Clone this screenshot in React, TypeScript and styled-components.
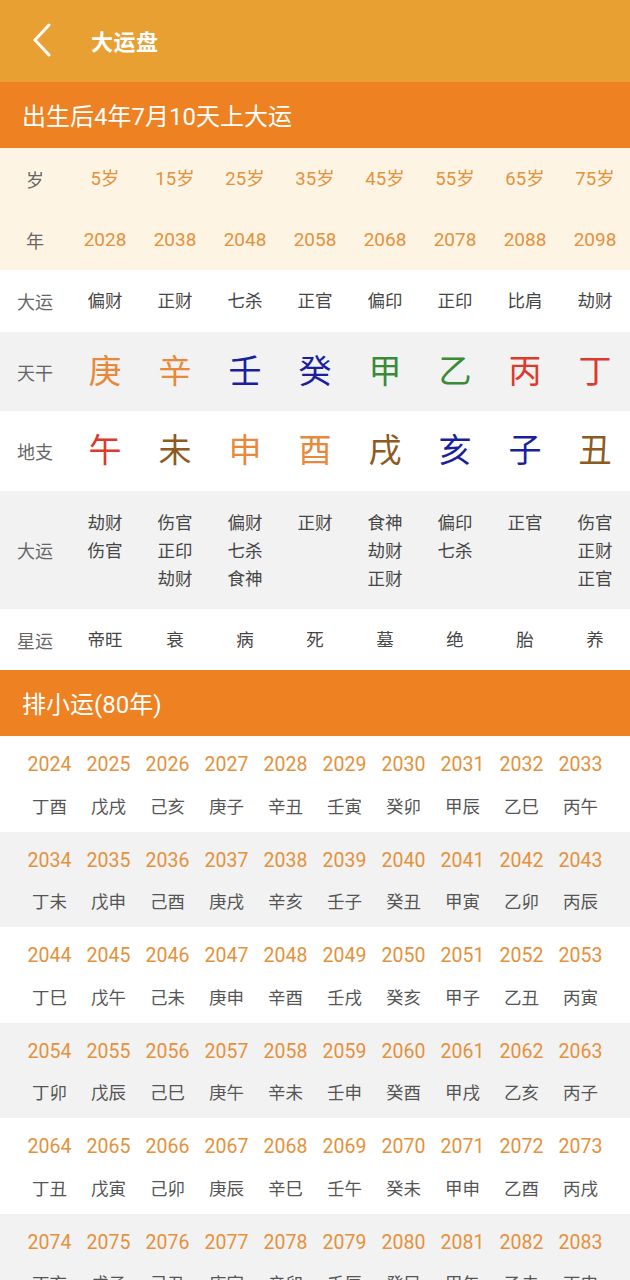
import * as React from 'react'
import styled, { createGlobalStyle } from 'styled-components'

const GlobalStyle = createGlobalStyle`
	html, body {
		margin: 0;
		padding: 0;
		background: #ffffff;
		font-family: Roboto, "Noto Sans CJK SC", sans-serif;
	}
`

const STEMS = '甲乙丙丁戊己庚辛壬癸'
const BRANCHES = '子丑寅卯辰巳午未申酉戌亥'

const ELEMENT_COLOR: Record<string, string> = {
	metal: '#e8883a',
	water: '#1c1f9c',
	wood: '#3a8a38',
	fire: '#db3a2c',
	earth: '#8d5a22',
}

const elementOf = (ch: string) => {
	if ('庚辛申酉'.includes(ch)) return 'metal'
	if ('壬癸亥子'.includes(ch)) return 'water'
	if ('甲乙寅卯'.includes(ch)) return 'wood'
	if ('丙丁午巳'.includes(ch)) return 'fire'
	return 'earth'
}

const ages = ['5岁', '15岁', '25岁', '35岁', '45岁', '55岁', '65岁', '75岁']
const years = ['2028', '2038', '2048', '2058', '2068', '2078', '2088', '2098']
const tenGods = ['偏财', '正财', '七杀', '正官', '偏印', '正印', '比肩', '劫财']
const stems = ['庚', '辛', '壬', '癸', '甲', '乙', '丙', '丁']
const branches = ['午', '未', '申', '酉', '戌', '亥', '子', '丑']
const hidden = [
	['劫财', '伤官'],
	['伤官', '正印', '劫财'],
	['偏财', '七杀', '食神'],
	['正财'],
	['食神', '劫财', '正财'],
	['偏印', '七杀'],
	['正官'],
	['伤官', '正财', '正官'],
]
const stars = ['帝旺', '衰', '病', '死', '墓', '绝', '胎', '养']

const Page = styled.div`
	width: 630px;
	display: flex;
	flex-direction: column;
`

const TopBar = styled.div`
	height: 82px;
	background: #e9a032;
	display: flex;
	align-items: center;
	padding-left: 30px;
	gap: 37px;
	color: #ffffff;
`

const BackIcon = styled.svg`
	width: 24px;
	height: 34px;
	margin-bottom: 2px;
`

const PageTitle = styled.div`
	font-size: 22px;
	font-weight: 700;
	letter-spacing: 0.5px;
	margin-bottom: 3px;
`

const SectionBar = styled.div`
	height: 66px;
	background: #ee8122;
	color: #ffffff;
	display: flex;
	align-items: center;
	padding-left: 22px;
	padding-bottom: 2px;
	box-sizing: border-box;
	font-size: 24px;
`

interface IRowProps {
	$h: number
	$bg: string
}

const Row = styled.div<IRowProps>`
	display: grid;
	grid-template-columns: repeat(9, 70px);
	height: ${p => p.$h}px;
	background: ${p => p.$bg};
	align-items: center;
`

const Label = styled.div`
	text-align: center;
	font-size: 18px;
	color: #666666;
`

interface ICellProps {
	$color?: string
	$size?: number
}

const Cell = styled.div<ICellProps>`
	text-align: center;
	font-size: ${p => p.$size || 17.5}px;
	color: ${p => p.$color || '#464646'};
	line-height: 28px;
	display: flex;
	flex-direction: column;
	align-items: center;
`

const HiddenCell = styled(Cell)`
	align-self: start;
	padding-top: 18px;
`

const BigChar = styled.div<{ $color: string }>`
	text-align: center;
	font-size: 33px;
	color: ${p => p.$color};
	line-height: 40px;
`

const YearBlock = styled.div<{ $bg: string }>`
	background: ${p => p.$bg};
	height: 95.5px;
	box-sizing: border-box;
	padding: 12px 20px 0;
	display: grid;
	grid-template-columns: repeat(10, 59px);
	grid-template-rows: 33px 48px;
	align-items: center;
`

const SmallYear = styled.div`
	text-align: center;
	font-size: 19.5px;
	color: #e5913c;
`

const SmallGz = styled.div`
	text-align: center;
	font-size: 17.5px;
	color: #555555;
`

const ganzhi = (i: number) => STEMS[(3 + i) % 10] + BRANCHES[(9 + i) % 12]

export default function App() {
	const blocks = Array.from({ length: 8 }, (_, b) => b)

	return (
		<Page>
			<GlobalStyle />
			<TopBar>
				<BackIcon viewBox="0 0 24 34">
					<path d="M19 2 L5 17 L19 32" fill="none" stroke="#ffffff" strokeWidth="3" strokeLinecap="round" strokeLinejoin="round" />
				</BackIcon>
				<PageTitle>大运盘</PageTitle>
			</TopBar>
			<SectionBar>出生后4年7月10天上大运</SectionBar>

			<Row $h={61} $bg="#fef4e3">
				<Label>岁</Label>
				{ages.map(a => (
					<Cell key={a} $color="#e5913c" $size={18.5}>{a}</Cell>
				))}
			</Row>
			<Row $h={61} $bg="#fef4e3">
				<Label>年</Label>
				{years.map(y => (
					<Cell key={y} $color="#e5913c" $size={19}>{y}</Cell>
				))}
			</Row>
			<Row $h={62} $bg="#ffffff">
				<Label>大运</Label>
				{tenGods.map(t => (
					<Cell key={t}>{t}</Cell>
				))}
			</Row>
			<Row $h={79} $bg="#f2f2f2">
				<Label>天干</Label>
				{stems.map(s => (
					<BigChar key={s} $color={ELEMENT_COLOR[elementOf(s)]}>{s}</BigChar>
				))}
			</Row>
			<Row $h={80} $bg="#ffffff">
				<Label>地支</Label>
				{branches.map(s => (
					<BigChar key={s} $color={ELEMENT_COLOR[elementOf(s)]}>{s}</BigChar>
				))}
			</Row>
			<Row $h={118} $bg="#f2f2f2">
				<Label>大运</Label>
				{hidden.map((list, i) => (
					<HiddenCell key={i}>
						{list.map(h => (
							<span key={h}>{h}</span>
						))}
					</HiddenCell>
				))}
			</Row>
			<Row $h={61} $bg="#ffffff">
				<Label>星运</Label>
				{stars.map(s => (
					<Cell key={s}>{s}</Cell>
				))}
			</Row>

			<SectionBar>排小运(80年)</SectionBar>
			{blocks.map(b => (
				<YearBlock key={b} $bg={b % 2 === 0 ? '#ffffff' : '#f2f2f2'}>
					{Array.from({ length: 10 }, (_, k) => (
						<SmallYear key={'y' + k}>{2024 + b * 10 + k}</SmallYear>
					))}
					{Array.from({ length: 10 }, (_, k) => (
						<SmallGz key={'g' + k}>{ganzhi(b * 10 + k)}</SmallGz>
					))}
				</YearBlock>
			))}
		</Page>
	)
}
